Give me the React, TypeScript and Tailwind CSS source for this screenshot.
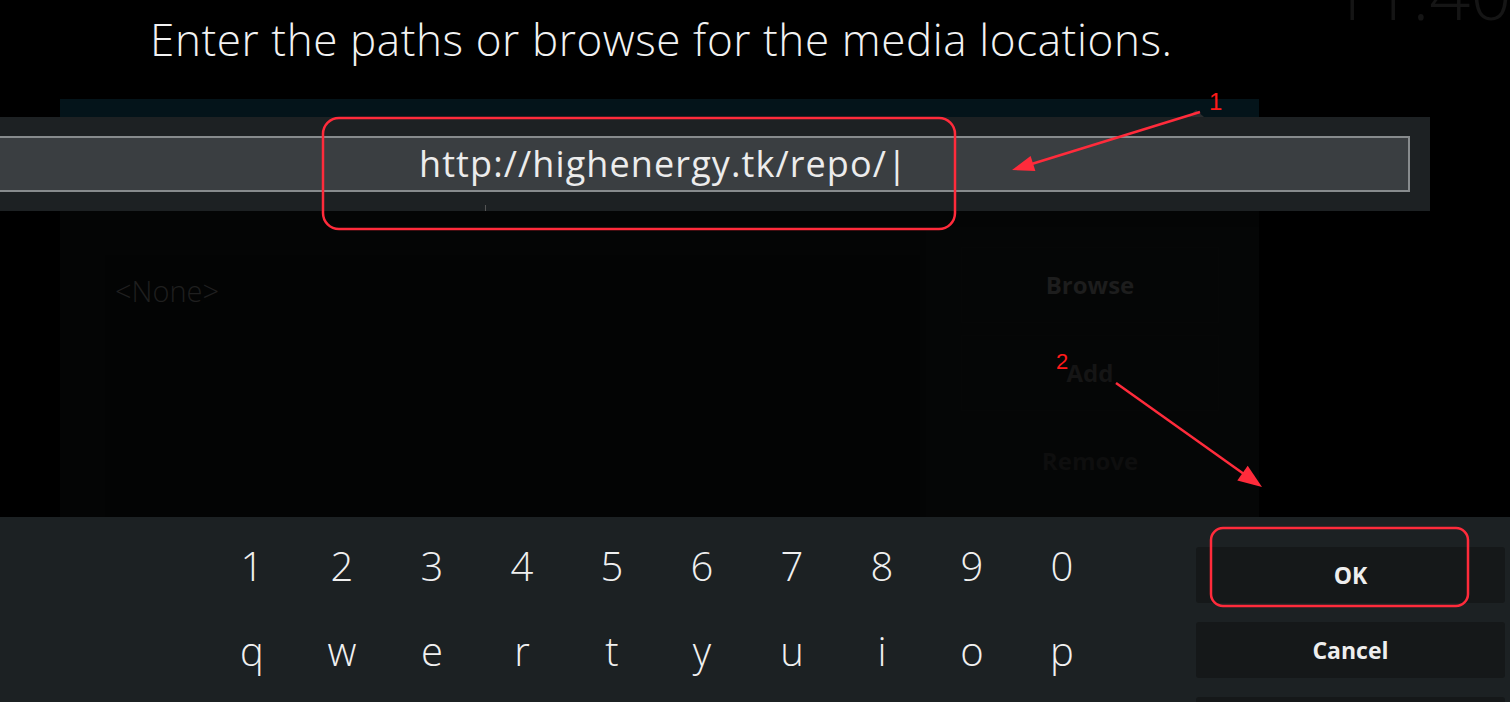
import React from "react";

export default function App() {
  const digits = ["1", "2", "3", "4", "5", "6", "7", "8", "9", "0"];
  const letters = ["q", "w", "e", "r", "t", "y", "u", "i", "o", "p"];
  return (
    <div className="relative w-[1510px] h-[702px] overflow-hidden bg-black font-['Open_Sans',sans-serif] text-white">
      {/* clock (cut off at top) */}
      <div className="absolute left-[1330px] top-[-44px] text-[72px] font-light text-[#151515] leading-none whitespace-nowrap">
        11:40
      </div>

      {/* heading */}
      <div className="h-[99px] pl-[150px] pt-[17px]">
        <div className="text-[44px] font-light leading-none tracking-[0.6px] text-[#f2f2f2] whitespace-nowrap">
          Enter the paths or browse for the media locations.
        </div>
      </div>

      {/* dialog */}
      <div className="relative h-[418px]">
        <div className="ml-[60px] w-[1199px] h-full flex flex-col">
          <div className="h-[18px] bg-[#04141a]" />
          <div className="h-[94px]" />
          <div className="flex-1 flex bg-[#040505]">
            <div className="ml-[45px] mt-[44px] w-[815px] bg-[#030404]">
              <div className="pl-[10px] pt-[14px] text-[29px] font-light text-[#1f1f1f]">&lt;None&gt;</div>
            </div>
            <div className="ml-auto w-[333px] mt-[16px] bg-[#050606] flex flex-col gap-[12px] pl-[35px] pr-[40px] pt-[20px]">
              <div className="h-[76px] border border-[#060707] flex items-center justify-center text-[24px] font-bold text-[#1d1d1d]">Browse</div>
              <div className="h-[76px] border border-[#060707] flex items-center justify-center text-[24px] font-bold text-[#151515]">Add</div>
              <div className="h-[76px] border border-[#050606] flex items-center justify-center text-[24px] font-bold text-[#0e0e0e]">Remove</div>
            </div>
          </div>
        </div>

        {/* input band overlays dialog */}
        <div className="absolute left-0 top-[18px] w-[1430px] h-[94px] bg-[#1d2123]">
          <div className="absolute left-[1188px] top-[-7px] w-0 h-0 border-l-[8px] border-r-[8px] border-b-[7px] border-l-transparent border-r-transparent border-b-[#2a2d2f]" />
          <div className="mt-[19px] w-[1410px] h-[56px] bg-[#3a3e41] border-y-2 border-r-2 border-[#878b8d] flex items-center pl-[419px]">
            <span className="text-[36px] tracking-[1.1px] text-[#ececec] leading-none whitespace-nowrap">http://highenergy.tk/repo/|</span>
          </div>
          <div className="absolute left-[485px] top-[88px] w-px h-[6px] bg-[#555]" />
        </div>
      </div>

      {/* keyboard */}
      <div className="h-[185px] bg-[#1c2123] flex">
        <div className="ml-[207px] pt-[6px] flex flex-col">
          {[digits, letters].map((row, i) => (
            <div key={i} className="h-[85px] flex items-center">
              {row.map((k) => (
                <div key={k} className="w-[90px] text-center text-[40px] font-light text-[#f0f0f0] leading-none">
                  {k}
                </div>
              ))}
            </div>
          ))}
        </div>
        <div className="ml-auto mr-[5px] w-[309px] pt-[30px] flex flex-col gap-[19px]">
          <div className="h-[56px] shrink-0 rounded-[3px] bg-[#151819] flex items-center justify-center text-[23px] font-bold text-[#eeeeee]">OK</div>
          <div className="h-[56px] shrink-0 rounded-[3px] bg-[#151819] flex items-center justify-center text-[23px] font-bold text-[#eeeeee]">Cancel</div>
          <div className="h-[56px] shrink-0 rounded-[3px] bg-[#151819]" />
        </div>
      </div>

      {/* annotations */}
      <svg className="absolute inset-0 pointer-events-none" width="1510" height="702" viewBox="0 0 1510 702">
        <rect x="323" y="118" width="632" height="111" rx="16" fill="none" stroke="#ff2b3b" strokeWidth="2.5" />
        <line x1="1200" y1="112" x2="1030" y2="164.5" stroke="#ff2b3b" strokeWidth="2.5" />
        <polygon points="1012,170 1035.4,171.1 1030.6,155.9" fill="#ff2b3b" />
        <text x="1209" y="110" fontSize="24" fill="#ff1a1a" fontFamily="Liberation Sans, sans-serif">1</text>
        <text x="1056" y="369" fontSize="22" fill="#ff1a1a" fontFamily="Liberation Sans, sans-serif">2</text>
        <line x1="1116" y1="383" x2="1246" y2="475.5" stroke="#ff2b3b" strokeWidth="2.5" />
        <polygon points="1262,487 1237.3,480.4 1247.7,465.8" fill="#ff2b3b" />
        <rect x="1211" y="528" width="257" height="78" rx="12" fill="none" stroke="#ff2b3b" strokeWidth="2.5" />
      </svg>
    </div>
  );
}
